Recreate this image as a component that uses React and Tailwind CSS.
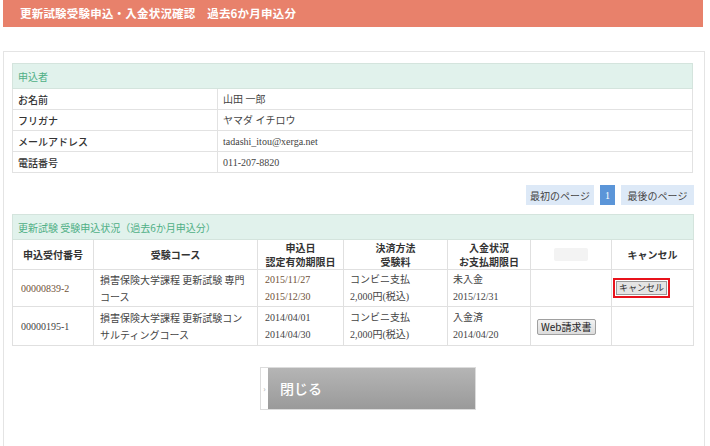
import React from 'react'

const SERIF = { fontFamily: '"Liberation Serif", "Noto Sans CJK JP", serif' }

const applicant = [
  ['お名前', '山田 一郎'],
  ['フリガナ', 'ヤマダ イチロウ'],
  ['メールアドレス', 'tadashi_itou@xerga.net'],
  ['電話番号', '011-207-8820'],
]

const headers = [
  ['申込受付番号'],
  ['受験コース'],
  ['申込日', '認定有効期限日'],
  ['決済方法', '受験料'],
  ['入金状況', 'お支払期限日'],
  [''],
  ['キャンセル'],
]

const colWidths = [81, 164, 86, 104, 83, 81, 82]

function CancelButton() {
  return (
    <div className="inline-block border-2 border-[#e8121b] p-[1px]">
      <div className="border border-[#9a9a9a] bg-[#e4e4e4] px-[2px] text-[9px] leading-[12px] text-[#333]">
        キャンセル
      </div>
    </div>
  )
}

function WebButton() {
  return (
    <div className="inline-block rounded-[2px] border border-[#a0a0a0] bg-gradient-to-b from-[#f2f2f2] to-[#dcdcdc] px-[3px] text-[10px] leading-[14px] text-[#222]">
      Web請求書
    </div>
  )
}

export default function App() {
  return (
    <div
      className="w-[710px] h-[446px] overflow-hidden bg-white text-[#333]"
      style={{ fontFamily: '"Noto Sans CJK JP", "Liberation Sans", sans-serif' }}
    >
      {/* title bar */}
      <div className="ml-[3px] w-[700px] h-[27px] bg-[#e8816b] flex items-center pl-[17px] text-white text-[11.5px] font-bold tracking-[0.2px]">
        更新試験受験申込・入金状況確認　過去6か月申込分
      </div>

      <div className="ml-[3px] mt-[24px] w-[702px] h-[400px] border border-b-0 border-[#e4e4e4] pl-[8px] pr-[10px] pt-[11px]">
        {/* 申込者 */}
        <table className="w-[681px] table-fixed border-collapse text-[10px]">
          <colgroup>
            <col className="w-[205px]" />
            <col />
          </colgroup>
          <tbody>
            <tr className="h-[25px]">
              <td colSpan={2} className="bg-[#e1f2ec] border border-[#d4e4dd] pl-[5px] text-[#4faf85]">
                申込者
              </td>
            </tr>
            {applicant.map(([k, v]) => (
              <tr key={k} className="h-[21px]">
                <td className="border border-[#e2e2e2] pl-[5px] text-[#333] font-medium">{k}</td>
                <td className="border border-[#e2e2e2] pl-[5px] text-[#444]" style={SERIF}>
                  {v}
                </td>
              </tr>
            ))}
          </tbody>
        </table>

        {/* pagination */}
        <div className="mt-[12px] flex justify-end gap-[6px] text-[10px] h-[20px]">
          <div className="w-[68px] bg-[#dde9f7] flex items-center justify-center text-[#444]">最初のページ</div>
          <div className="w-[15px] bg-[#5b95d8] flex items-center justify-center text-white" style={SERIF}>1</div>
          <div className="w-[73px] bg-[#dde9f7] flex items-center justify-center text-[#444]">最後のページ</div>
        </div>

        {/* 受験申込状況 */}
        <table className="mt-[9px] w-[681px] table-fixed border-collapse text-[10px]">
          <colgroup>
            {colWidths.map((w, i) => (
              <col key={i} style={{ width: w }} />
            ))}
          </colgroup>
          <tbody>
            <tr className="h-[25px]">
              <td colSpan={7} className="bg-[#e1f2ec] border border-[#d4e4dd] pl-[5px] text-[#4faf85]">
                更新試験 受験申込状況（過去6か月申込分）
              </td>
            </tr>
            <tr className="h-[30px]">
              {headers.map((h, i) => (
                <th key={i} className="border border-[#e0e0e0] text-center font-bold text-[10px] leading-[14px] text-[#333]">
                  {i === 5 ? (
                    <div className="mx-auto w-[34px] h-[13px] bg-[#f3f3f3] rounded-[2px]" />
                  ) : (
                    h.map((l) => <div key={l}>{l}</div>)
                  )}
                </th>
              ))}
            </tr>
            <tr className="h-[37px] leading-[17px]">
              <td className="border border-[#e0e0e0] pl-[8px] text-[#6f5238]" style={SERIF}>00000839-2</td>
              <td className="border border-[#e0e0e0] pl-[6px] text-[#444]">損害保険大学課程 更新試験 専門<br />コース</td>
              <td className="border border-[#e0e0e0] pl-[7px] text-[#6f5238]" style={SERIF}>2015/11/27<br />2015/12/30</td>
              <td className="border border-[#e0e0e0] pl-[6px] text-[#444]" style={SERIF}>コンビニ支払<br />2,000円(税込)</td>
              <td className="border border-[#e0e0e0] pl-[5px] text-[#444]" style={SERIF}>未入金<br />2015/12/31</td>
              <td className="border border-[#e0e0e0]"></td>
              <td className="border border-[#e0e0e0] pl-[1px] align-top pt-[8px]"><CancelButton /></td>
            </tr>
            <tr className="h-[39px] leading-[17px]">
              <td className="border border-[#e0e0e0] pl-[8px] text-[#444]" style={SERIF}>00000195-1</td>
              <td className="border border-[#e0e0e0] pl-[6px] text-[#444]">損害保険大学課程 更新試験コン<br />サルティングコース</td>
              <td className="border border-[#e0e0e0] pl-[7px] text-[#444]" style={SERIF}>2014/04/01<br />2014/04/30</td>
              <td className="border border-[#e0e0e0] pl-[6px] text-[#444]" style={SERIF}>コンビニ支払<br />2,000円(税込)</td>
              <td className="border border-[#e0e0e0] pl-[5px] text-[#444]" style={SERIF}>入金済<br />2014/04/20</td>
              <td className="border border-[#e0e0e0] pl-[6px]"><WebButton /></td>
              <td className="border border-[#e0e0e0]"></td>
            </tr>
          </tbody>
        </table>

        {/* close button */}
        <div className="mt-[21px] ml-[248px] w-[216px] h-[43px] border border-[#dcdcdc] flex">
          <div className="w-[7px] bg-white flex items-center justify-center text-[#aaa] text-[8px]">›</div>
          <div className="flex-1 bg-gradient-to-b from-[#b5b5b5] to-[#9a9a9a] flex items-center pl-[12px] text-white text-[14px] font-medium">
            閉じる
          </div>
        </div>
      </div>
    </div>
  )
}
